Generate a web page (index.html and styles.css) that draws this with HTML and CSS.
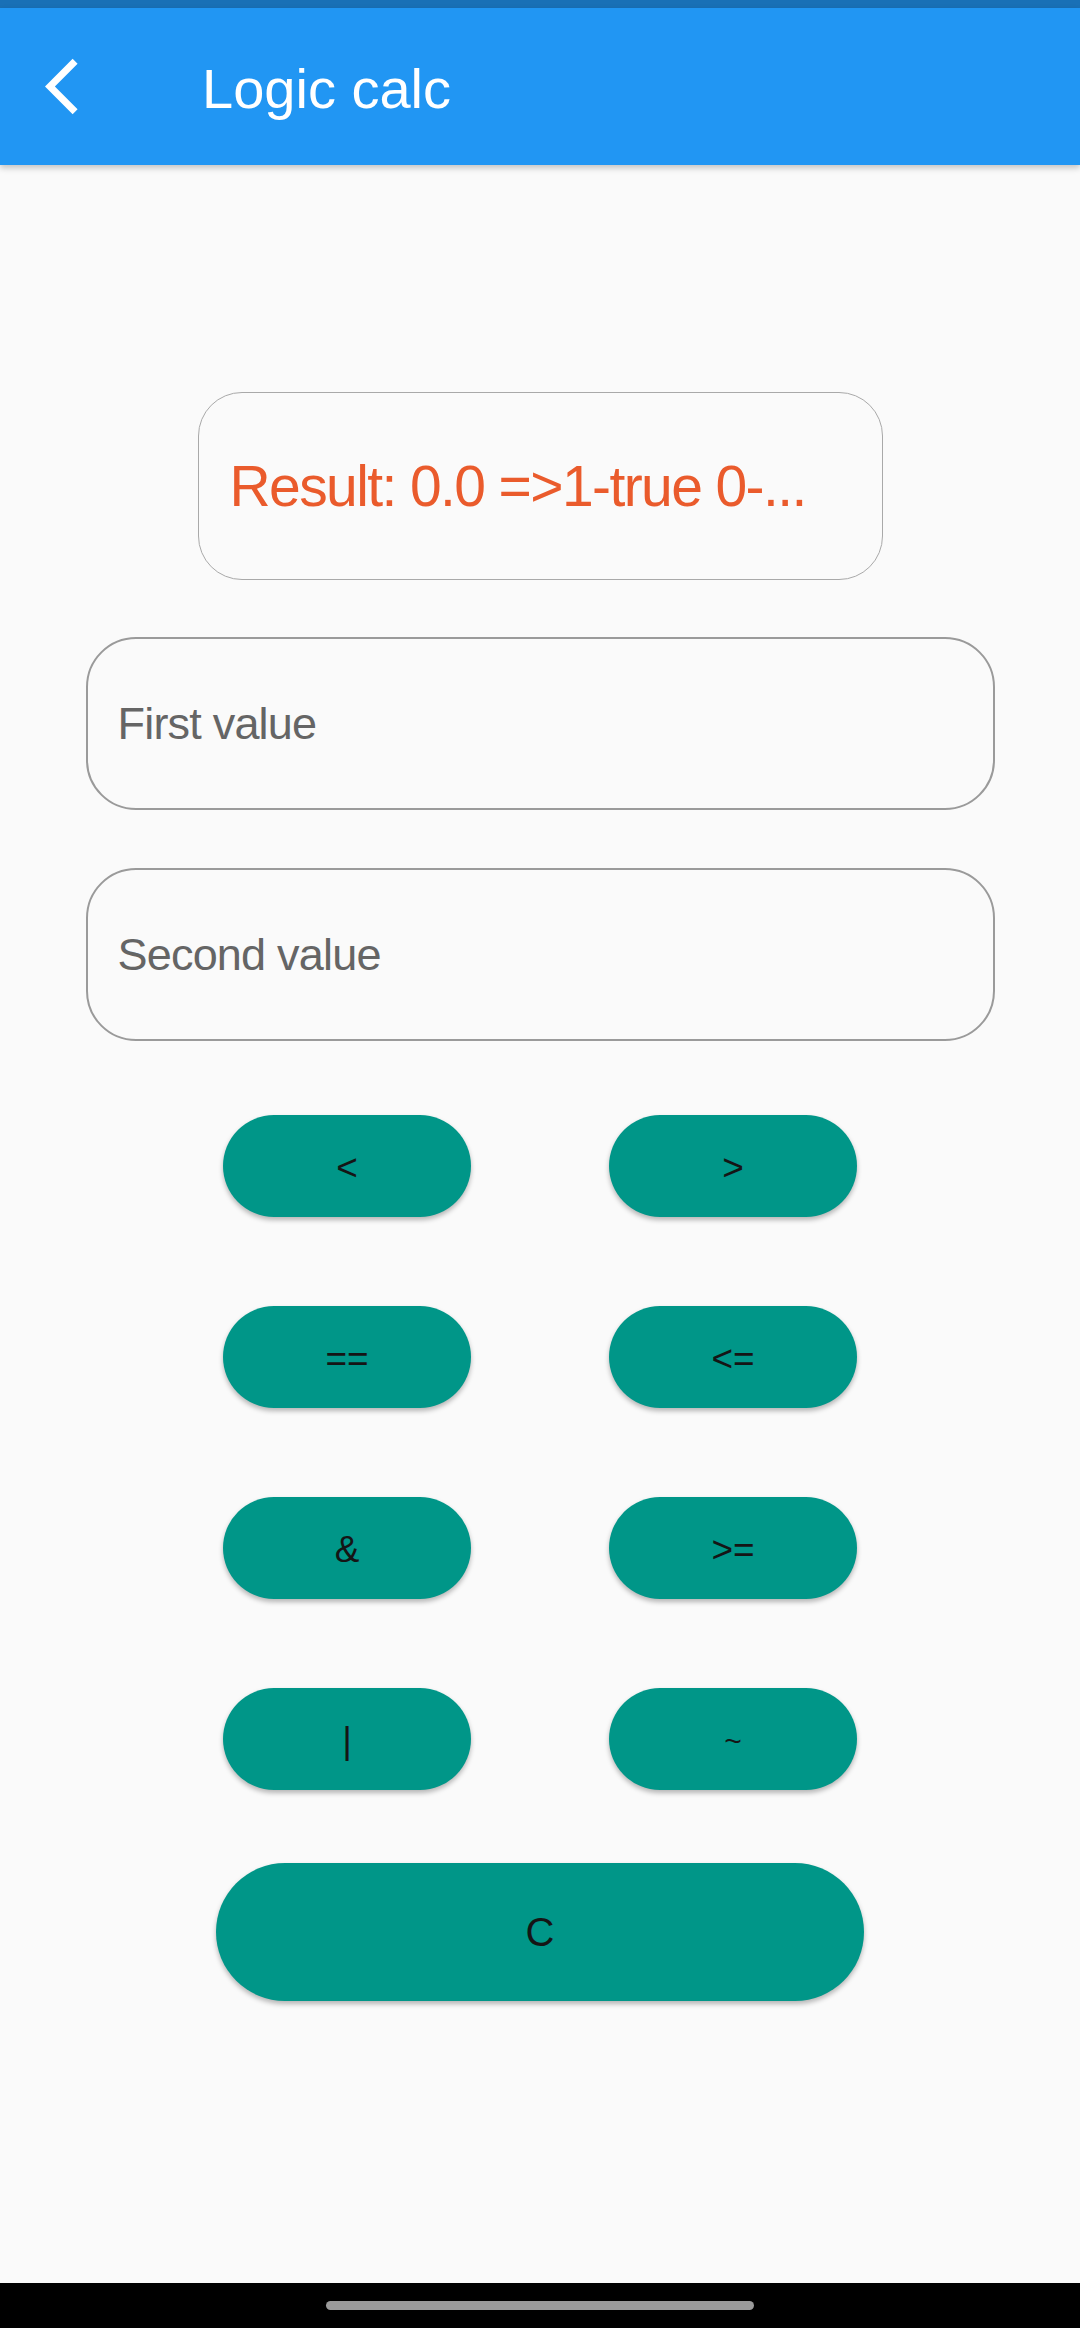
FILE: index.html
```html
<!DOCTYPE html>
<html>
<head>
<meta charset="utf-8">
<title>Logic calc</title>
<link rel="stylesheet" href="styles.css">
</head>
<body>
<div class="screen">
  <div class="status"></div>
  <header class="appbar">
    <svg class="back" viewBox="0 0 24 24" width="67" height="67"><path d="M11.67 3.87L9.9 2.1 0 12l9.9 9.9 1.77-1.77L3.54 12z" fill="#ffffff"/></svg>
    <h1 class="title">Logic calc</h1>
  </header>
  <main class="content">
    <div class="result"><span class="result-text">Result: 0.0 =&gt;1-true 0-...</span></div>
    <div class="field"><span class="hint">First value</span></div>
    <div class="field field-second"><span class="hint">Second value</span></div>
    <div class="pad">
      <button class="op">&lt;</button>
      <button class="op">&gt;</button>
      <button class="op">==</button>
      <button class="op">&lt;=</button>
      <button class="op">&amp;</button>
      <button class="op">&gt;=</button>
      <button class="op">|</button>
      <button class="op op-small">~</button>
    </div>
    <button class="clear">C</button>
  </main>
  <div class="navbar"><div class="handle"></div></div>
</div>
</body>
</html>
```

FILE: styles.css
```css
html, body {
  margin: 0;
  padding: 0;
  background: #fafafa;
}

.screen {
  width: 1080px;
  height: 2328px;
  display: flex;
  flex-direction: column;
  font-family: "Liberation Sans", Arial, sans-serif;
  background: #fafafa;
  overflow: hidden;
}

.status {
  height: 8px;
  background: #1970b6;
  flex: none;
}

.appbar {
  height: 157px;
  flex: none;
  background: #2196f3;
  display: flex;
  align-items: center;
  padding-left: 45px;
  box-shadow: 0 3px 6px rgba(0, 0, 0, 0.22);
  position: relative;
  z-index: 1;
}

.back {
  display: block;
  flex: none;
}

.title {
  margin: 4px 0 0 90px;
  font-weight: normal;
  font-size: 56px;
  color: #ffffff;
  letter-spacing: 0;
}

.content {
  flex: 1;
  display: flex;
  flex-direction: column;
  align-items: center;
  padding-top: 227px;
}

.result {
  box-sizing: border-box;
  width: 685px;
  height: 188px;
  border: 1.5px solid #a9a9a9;
  border-radius: 44px;
  display: flex;
  align-items: center;
  padding-left: 31px;
}

.result-text {
  font-size: 57px;
  letter-spacing: -1.6px;
  color: #ea5b2c;
  white-space: nowrap;
}

.field {
  box-sizing: border-box;
  width: 909px;
  height: 173px;
  margin-top: 57px;
  border: 2px solid #9a9a9a;
  border-radius: 50px;
  display: flex;
  align-items: center;
  padding-left: 30px;
}

.field-second {
  margin-top: 58px;
}

.hint {
  font-size: 45px;
  letter-spacing: -0.8px;
  color: #656565;
}

.pad {
  margin-top: 74px;
  display: grid;
  grid-template-columns: 248px 248px;
  column-gap: 138px;
  row-gap: 89px;
}

.op,
.clear {
  border: none;
  background: #009688;
  color: #151515;
  font-family: "Liberation Sans", Arial, sans-serif;
  font-size: 37px;
  padding: 0;
  display: flex;
  align-items: center;
  justify-content: center;
  box-shadow: 0 3px 5px rgba(0, 0, 0, 0.28);
}

.op {
  width: 248px;
  height: 102px;
  border-radius: 51px;
  padding-top: 3px;
}

.op-small {
  font-size: 30px;
}

.clear {
  margin-top: 73px;
  width: 648px;
  height: 138px;
  border-radius: 69px;
  font-size: 40px;
}

.navbar {
  height: 45px;
  flex: none;
  background: #000000;
  display: flex;
  justify-content: center;
  padding-top: 18px;
  box-sizing: border-box;
}

.handle {
  width: 428px;
  height: 9px;
  border-radius: 5px;
  background: #9a9a9a;
}
```
